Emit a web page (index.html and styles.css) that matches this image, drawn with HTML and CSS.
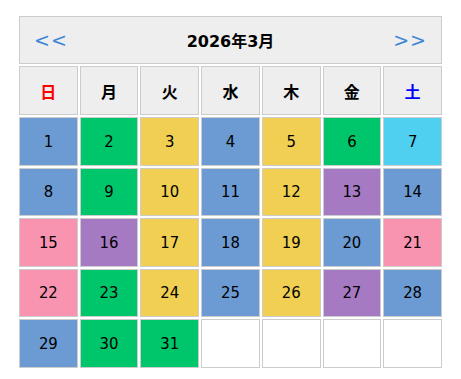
FILE: index.html
```html
<!DOCTYPE html>
<html lang="ja">
<head>
<meta charset="utf-8">
<link rel="stylesheet" href="styles.css">
</head>
<body>
<div class="wrap">
<table class="cal">
  <thead>
    <tr>
      <th class="title" colspan="7">
        <div class="title-bar">
          <span class="nav">&lt;&lt;</span>
          <span class="month">2026年3月</span>
          <span class="nav">&gt;&gt;</span>
        </div>
      </th>
    </tr>
    <tr class="dow">
      <th class="sun">日</th><th>月</th><th>火</th><th>水</th><th>木</th><th>金</th><th class="sat">土</th>
    </tr>
  </thead>
  <tbody>
    <tr><td class="c-blue">1</td><td class="c-green">2</td><td class="c-yellow">3</td><td class="c-blue">4</td><td class="c-yellow">5</td><td class="c-green">6</td><td class="c-cyan">7</td></tr>
    <tr><td class="c-blue">8</td><td class="c-green">9</td><td class="c-yellow">10</td><td class="c-blue">11</td><td class="c-yellow">12</td><td class="c-purple">13</td><td class="c-blue">14</td></tr>
    <tr><td class="c-pink">15</td><td class="c-purple">16</td><td class="c-yellow">17</td><td class="c-blue">18</td><td class="c-yellow">19</td><td class="c-blue">20</td><td class="c-pink">21</td></tr>
    <tr><td class="c-pink">22</td><td class="c-green">23</td><td class="c-yellow">24</td><td class="c-blue">25</td><td class="c-yellow">26</td><td class="c-purple">27</td><td class="c-blue">28</td></tr>
    <tr><td class="c-blue">29</td><td class="c-green">30</td><td class="c-green">31</td><td></td><td></td><td></td><td></td></tr>
  </tbody>
</table>
</div>
</body>
</html>
```
FILE: styles.css
```css
html, body {
  margin: 0;
  padding: 0;
  background: #ffffff;
}
body {
  font-family: "DejaVu Sans", "Noto Sans CJK JP", sans-serif;
  color: #000;
}
.wrap {
  padding-top: 14px;
  display: flex;
  justify-content: center;
}
.cal {
  width: 427px;
  border-collapse: separate;
  border-spacing: 2px;
  table-layout: fixed;
}
.cal th, .cal td {
  border: 1px solid #cccccc;
  text-align: center;
  padding: 0;
}
.title {
  height: 46px;
  background: #eeeeee;
}
.title-bar {
  display: flex;
  align-items: center;
  justify-content: space-between;
  padding: 0 14px;
}
.nav {
  color: #3d87d6;
  font-size: 19px;
  font-weight: normal;
  letter-spacing: 1px;
}
.month {
  font-size: 16px;
  font-weight: bold;
}
.dow th {
  height: 47px;
  background: #eeeeee;
  font-size: 16px;
  font-weight: bold;
}
.dow .sun { color: #ff0000; }
.dow .sat { color: #0000ff; }
.cal td {
  height: 46.5px;
  font-family: "DejaVu Sans Condensed", "DejaVu Sans", sans-serif;
  font-size: 16.5px;
  background: #ffffff;
}
.c-blue { background: #6b9bd2 !important; }
.c-green { background: #00c66b !important; }
.c-yellow { background: #f0cf52 !important; }
.c-cyan { background: #50d0f0 !important; }
.c-purple { background: #a67ac3 !important; }
.c-pink { background: #f894b0 !important; }
```
